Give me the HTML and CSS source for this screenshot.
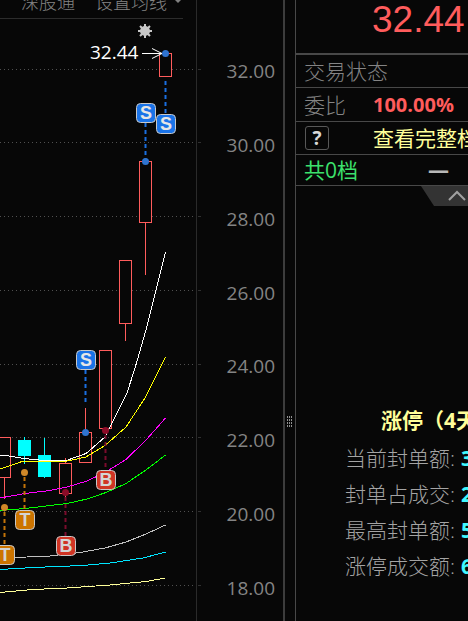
FILE: index.html
```html
<!DOCTYPE html>
<html lang="zh-CN">
<head>
    <meta charset="UTF-8">
    <meta name="viewport" content="width=device-width, initial-scale=1.0">
    <title>32.44</title>
    <link rel="stylesheet" href="styles.css">
</head>
<body>
    <!-- K-line chart -->
    <main class="chart">
        <div class="toolbar">
            <a href="#">深股通</a>
            <button type="button">设置均线 <span class="caret"></span></button>
        </div>
        <svg class="kline" viewBox="0 19 196 602">
            <!-- Grid -->
            <path class="grid" d="M0 69.5H193M0 142.5H193M0 216.5H193M0 290.5H193M0 364.5H193M0 437.5H193M0 511.5H193M0 585.5H193"/>
            <path class="tick" d="M198 69.5h3M198 142.5h3M198 216.5h3M198 290.5h3M198 364.5h3M198 437.5h3M198 511.5h3M198 585.5h3"/>

            <!-- Candles -->
            <g class="up">
                <path d="M4.5 478V499M65.5 458V463M65.5 494V498M85.5 408V432M125.5 324V341M145.5 223V275"/>
                <rect x="-1.5" y="437.5" width="12" height="40"/>
                <rect x="59.5" y="463.5" width="12" height="30"/>
                <rect x="79.5" y="432.5" width="12" height="30"/>
                <rect x="99.5" y="350.5" width="12" height="78"/>
                <rect x="119.5" y="260.5" width="12" height="63"/>
                <rect x="139.5" y="161.5" width="12" height="61"/>
                <rect x="159.5" y="53.5" width="12" height="23"/>
            </g>
            <g class="down">
                <path d="M24.5 437V464M44.5 438V478"/>
                <rect x="18" y="440" width="13" height="16"/>
                <rect x="38" y="455" width="13" height="22"/>
            </g>

            <!-- Moving averages -->
            <g class="averages">
                <polyline stroke="#ffffff" points="0,455 6,455.5 24,458.5 44,460.5 65,461 86,453.5 105,437 112,423 127,393 135,368 146,330 156,290 165.5,252"/>
                <polyline stroke="#ffff00" points="0,469 22,461.5 65,461.5 86,457 105,445.5 126,427 145,398 165.5,357"/>
                <polyline stroke="#ff00ff" points="0,498 25,493.5 50,490.5 67,487 87,481 105,472.5 126,459.5 146,440 165.5,418"/>
                <polyline stroke="#00ff00" points="0,510.5 25,508.5 67,503.5 87,499 106,492.5 126,483.5 146,470 165.5,455"/>
                <polyline stroke="#c0c0c0" points="0,558 15,557.5 50,556 80,552.5 105,548 126,542 146,534 165.5,525"/>
                <polyline stroke="#00e5ff" points="0,569.5 33,567.5 83,565.5 110,563 143,558 165.5,552"/>
                <polyline stroke="#ffff99" points="0,592.5 33,589.5 67,588 110,585 146,581.5 165.5,578"/>
            </g>

            <!-- Trade marks -->
            <g class="mark sell">
                <path d="M165.5 81V115M145.5 123V160M85.5 370V403"/>
                <circle cx="165.5" cy="53.5" r="3.5"/>
                <circle cx="145.5" cy="161.5" r="3.5"/>
                <circle cx="85.5" cy="432.5" r="3.5"/>
                <rect x="136.5" y="103.5" width="19" height="19" rx="4"/>
                <rect x="156.5" y="114.5" width="19" height="19" rx="4"/>
                <rect x="76.5" y="350.5" width="19" height="19" rx="4"/>
                <text x="146" y="119">S</text>
                <text x="166" y="130">S</text>
                <text x="86" y="366">S</text>
            </g>
            <g class="mark buy">
                <path d="M105.5 435V471M65.5 497V537"/>
                <circle cx="105.5" cy="430.5" r="3.5"/>
                <circle cx="65.5" cy="492.5" r="3.5"/>
                <rect x="96.5" y="470.5" width="19" height="19" rx="4"/>
                <rect x="56.5" y="536.5" width="19" height="19" rx="4"/>
                <text x="106" y="486">B</text>
                <text x="66" y="552">B</text>
            </g>
            <g class="mark both">
                <path d="M24.5 477V510M4.5 512V545"/>
                <circle cx="24.5" cy="472.5" r="3.5"/>
                <circle cx="4.5" cy="507.5" r="3.5"/>
                <rect x="15.5" y="510.5" width="19" height="19" rx="4"/>
                <rect x="-4.5" y="545.5" width="19" height="19" rx="4"/>
                <text x="25" y="526">T</text>
                <text x="5" y="561">T</text>
            </g>

            <!-- Highest price -->
            <path class="spark" d="M145 24V38M138 31H152M140 26L150 36M150 26L140 36"/>
            <circle class="spark-core" cx="145" cy="31" r="5"/>
            <text class="high" x="90" y="59">32.44</text>
            <path class="arrow" d="M142 53.5H162M152 48.5L162 53.5L152 58.5"/>
        </svg>
    </main>

    <!-- Price axis -->
    <ul class="axis">
        <li>32.00</li>
        <li>30.00</li>
        <li>28.00</li>
        <li>26.00</li>
        <li>24.00</li>
        <li>22.00</li>
        <li>20.00</li>
        <li>18.00</li>
    </ul>

    <div class="splitter">
        <svg width="6" height="12" viewBox="0 0 6 12">
            <path d="M0.5 0V12M2.5 0V12M4.5 0V12"/>
        </svg>
    </div>

    <!-- Quote panel -->
    <aside class="quote">
        <div class="price">32.44</div>
        <div class="row">交易状态</div>
        <div class="row ratio"><span class="name">委比</span><strong>100.00%</strong></div>
        <div class="row full"><span class="name"><button type="button" class="help">?</button></span><a href="#">查看完整档</a></div>
        <div class="row levels"><span>共0档</span><span class="dash">—</span></div>
        <button type="button" class="fold" aria-label="收起">
            <svg width="72" height="20" viewBox="0 0 72 20">
                <path class="tab" d="M0 0H72L59 20H13Z"/>
                <path class="chevron" d="M28 14L36 6L44 14"/>
            </svg>
        </button>

        <section class="limit">
            <h2>涨停（4天</h2>
            <dl>
                <div><dt>当前封单额:</dt><dd>3</dd></div>
                <div><dt>封单占成交:</dt><dd>2</dd></div>
                <div><dt>最高封单额:</dt><dd>5</dd></div>
                <div><dt>涨停成交额:</dt><dd>6</dd></div>
            </dl>
        </section>
    </aside>
</body>
</html>
```
FILE: styles.css
```css
* {
    box-sizing: border-box;
}
body {
    margin: 0;
    min-height: 100vh;
    display: flex;
    overflow: hidden;
    background-color: #070707;
    color: #848484;
    font-family: "Open Sans", "Noto Sans CJK SC", sans-serif;
    font-size: 21px;
}
button {
    padding: 0;
    border: none;
    background: none;
    color: inherit;
    font: inherit;
    cursor: pointer;
}
a {
    color: inherit;
    text-decoration: none;
}

/* Chart */
.chart {
    flex: 1;
    min-width: 0;
}
.toolbar {
    display: flex;
    align-items: center;
    gap: 20px;
    height: 36px;
    margin: -17px 13px 0 0;
    padding-left: 21px;
    border-bottom: 1px solid #2c2c2c;
    font-size: 18px;
    font-weight: 300;
    white-space: nowrap;
}
.toolbar button {
    display: flex;
    align-items: center;
    gap: 7px;
}
.caret {
    border: 4px solid transparent;
    border-top-color: #808080;
    border-bottom: none;
}
.kline {
    display: block;
    width: 100%;
    overflow: visible;
    fill: none;
}
.grid {
    stroke: #505050;
    stroke-dasharray: 1 3;
}
.tick {
    stroke: #303030;
}
.up {
    stroke: #ff5c5c;
}
.up rect {
    fill: #070707;
}
.down path {
    stroke: #00ffff;
}
.down rect {
    fill: #00ffff;
}
.averages {
    shape-rendering: crispEdges;
}
.mark path {
    stroke-width: 2;
    stroke-dasharray: 4 3;
}
.mark rect {
    stroke: #c8c8c8;
}
.mark text {
    fill: #e6e6e6;
    font: bold 18px "Liberation Sans", sans-serif;
    text-anchor: middle;
}
.sell path {
    stroke: #1a6fe0;
}
.sell circle {
    fill: #2f74d0;
}
.sell rect {
    fill: #1a73e8;
}
.buy path {
    stroke: #7a0c2c;
}
.buy circle {
    fill: #8c0c28;
}
.buy rect {
    fill: #d03424;
}
.buy text,
.both text {
    fill: #d4d4d4;
}
.both path {
    stroke: #c47408;
}
.both circle {
    fill: #d08828;
}
.both rect {
    fill: #cc7400;
}
.spark {
    stroke: #c8c8c8;
    stroke-width: 2;
}
.spark-core {
    fill: #c8c8c8;
}
.high {
    fill: #ffffff;
    font-size: 19px;
}
.arrow {
    stroke: #ffffff;
}

/* Price axis */
.axis {
    display: flex;
    flex-direction: column;
    justify-content: space-between;
    width: 89px;
    margin: 0;
    padding: 59px 8px 21px 0;
    border-left: 1px solid #2a2a2a;
    border-right: 2px solid #3c3c3c;
    list-style: none;
    font-size: 19px;
    line-height: 24px;
    text-align: right;
}
.splitter {
    width: 10px;
    padding: 416px 0 0 2px;
    cursor: col-resize;
}
.splitter svg {
    display: block;
}
.splitter path {
    stroke: #909090;
    stroke-dasharray: 2 1;
}

/* Quote panel */
.quote {
    width: 173px;
    border-left: 1px solid #484848;
    overflow: hidden;
    white-space: nowrap;
}
.price {
    height: 55px;
    padding-left: 76px;
    border-bottom: 2px solid #484848;
    color: #ff5c5c;
    font: 37px/39px "Liberation Sans", sans-serif;
}
.row {
    display: flex;
    align-items: center;
    height: 33px;
    padding-left: 8px;
    border-bottom: 1px solid #484848;
    font-weight: 300;
    line-height: 30px;
}
.name {
    flex: none;
    width: 69px;
}
.ratio {
    height: 34px;
}
.ratio strong {
    color: #ff5c5c;
    font-size: 20px;
    font-weight: bold;
}
.full a {
    color: #ffff99;
    font-weight: normal;
}
.help {
    display: block;
    width: 24px;
    height: 24px;
    margin-left: 1px;
    border: 1px solid #585858;
    border-radius: 3px;
    color: #d8d8d8;
    font-size: 19px;
    font-weight: bold;
    line-height: 22px;
}
.levels {
    gap: 70px;
    height: 31px;
    color: #3ce06c;
    font-weight: normal;
    line-height: 28px;
}
.dash {
    color: #b8b8b8;
    font-weight: bold;
}
.fold {
    display: block;
    margin-left: 125px;
}
.fold svg {
    display: block;
}
.tab {
    fill: #333333;
}
.chevron {
    fill: none;
    stroke: #a0a0a0;
    stroke-width: 2;
}
.limit {
    padding: 198px 0 0 49px;
}
.limit h2 {
    margin: 0 0 4px;
    padding-left: 36px;
    color: #ffff99;
    font-size: 21px;
    line-height: 32px;
}
.limit dl {
    margin: 0;
}
.limit dl div {
    display: flex;
    gap: 6px;
    line-height: 36px;
}
.limit dt {
    color: #a4a4a4;
    font-weight: 300;
}
.limit dd {
    margin: 0;
    color: #40f8ff;
    font-weight: bold;
}
```
